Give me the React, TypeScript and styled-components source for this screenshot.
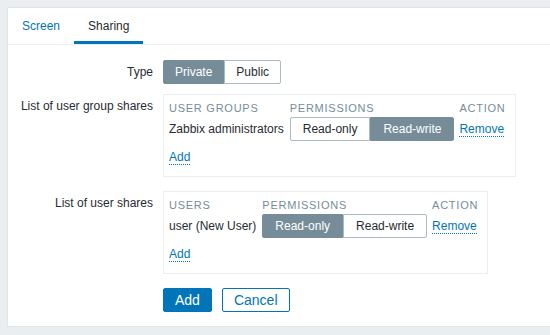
import React from 'react';
import styled, { createGlobalStyle } from 'styled-components';

const GlobalStyle = createGlobalStyle`
  html, body { margin: 0; padding: 0; }
  body {
    background: #ebeef0;
    font-family: "Liberation Sans", Arial, sans-serif;
    font-size: 12px;
    line-height: 14px;
    color: #1f2c33;
    overflow: hidden;
  }
`;

const Page = styled.div`
  padding: 7px 0 8px 7px;
`;

const Card = styled.div`
  background: #fff;
  border: 1px solid #dfe4e7;
  border-right: none;
  margin-right: -20px;
  padding-bottom: 14px;
`;

const TabBar = styled.div`
  display: flex;
  border-bottom: 1px solid #ebeef0;
`;

const Tab = styled.a<{ $active?: boolean }>`
  display: flex;
  align-items: center;
  height: 36px;
  padding: 0 14px;
  text-decoration: none;
  cursor: pointer;
  color: ${(p) => (p.$active ? '#1f2c33' : '#0275b8')};
  box-shadow: ${(p) => (p.$active ? 'inset 0 -3px 0 #0275b8' : 'none')};
`;

const Form = styled.div`
  display: grid;
  grid-template-columns: 145px 1fr;
  column-gap: 10px;
  row-gap: 10px;
  padding-top: 15px;
  align-items: start;
`;

const Label = styled.div`
  text-align: right;
  padding-top: 5px;
  white-space: nowrap;
`;

const Field = styled.div`
  display: flex;
  align-items: flex-start;
`;

const Segmented = styled.div<{ $tight?: boolean }>`
  display: inline-flex;
  --seg-pad: ${(p) => (p.$tight ? '11px' : '12px')};
`;

const Segment = styled.span<{ $on?: boolean }>`
  box-sizing: border-box;
  height: 24px;
  line-height: 22px;
  padding: 0 var(--seg-pad);
  white-space: nowrap;
  cursor: pointer;
  border: 1px solid ${(p) => (p.$on ? '#768d99' : '#acbbc2')};
  background: ${(p) => (p.$on ? '#768d99' : '#fff')};
  color: ${(p) => (p.$on ? '#fff' : '#1f2c33')};
  &:first-child { border-radius: 2px 0 0 2px; }
  &:last-child { border-radius: 0 2px 2px 0; }
`;

const ShareBox = styled.div`
  display: grid;
  grid-template-columns: repeat(3, auto);
  column-gap: 5px;
  justify-content: start;
  align-items: center;
  border: 1px solid #ebeef0;
  padding: 6px 9px 12px 5px;
  margin-bottom: 4px;
`;

const Th = styled.div`
  font-size: 11px;
  letter-spacing: 0.75px;
  text-transform: uppercase;
  color: #768d99;
  line-height: 14px;
  margin-bottom: 2px;
  white-space: nowrap;
`;

const Cell = styled.div<{ $first?: boolean }>`
  white-space: nowrap;
  margin-right: ${(p) => (p.$first ? '1px' : '0')};
`;

const AddCell = styled.div`
  grid-column: 1 / -1;
  margin-top: 9px;
`;

const Link = styled.a`
  color: #0275b8;
  text-decoration: none;
  border-bottom: 1px dotted #0275b8;
  cursor: pointer;
`;

const Buttons = styled.div`
  display: flex;
  gap: 10px;
`;

const Button = styled.button<{ $primary?: boolean }>`
  box-sizing: border-box;
  height: 24px;
  padding: 0 11px;
  font-family: inherit;
  font-size: 14px;
  line-height: 22px;
  border: 1px solid #0275b8;
  border-radius: 2px;
  cursor: pointer;
  background: ${(p) => (p.$primary ? '#0275b8' : '#fff')};
  color: ${(p) => (p.$primary ? '#fff' : '#0275b8')};
`;

type Share = { name: string; perm: 'ro' | 'rw' };

const ShareTable: React.FC<{ heading: string; item: Share }> = ({ heading, item }) => (
  <ShareBox>
    <Th>{heading}</Th>
    <Th>Permissions</Th>
    <Th>Action</Th>
    <Cell $first>{item.name}</Cell>
    <Segmented>
      <Segment $on={item.perm === 'ro'}>Read-only</Segment>
      <Segment $on={item.perm === 'rw'}>Read-write</Segment>
    </Segmented>
    <Cell>
      <Link>Remove</Link>
    </Cell>
    <AddCell>
      <Link>Add</Link>
    </AddCell>
  </ShareBox>
);

export default function App() {
  return (
    <>
      <GlobalStyle />
      <Page>
        <Card>
          <TabBar>
            <Tab>Screen</Tab>
            <Tab $active>Sharing</Tab>
          </TabBar>
          <Form>
            <Label>Type</Label>
            <Field>
              <Segmented $tight>
                <Segment $on>Private</Segment>
                <Segment>Public</Segment>
              </Segmented>
            </Field>

            <Label>List of user group shares</Label>
            <Field>
              <ShareTable heading="User groups" item={{ name: 'Zabbix administrators', perm: 'rw' }} />
            </Field>

            <Label>List of user shares</Label>
            <Field>
              <ShareTable heading="Users" item={{ name: 'user (New User)', perm: 'ro' }} />
            </Field>

            <div />
            <Field>
              <Buttons>
                <Button $primary>Add</Button>
                <Button>Cancel</Button>
              </Buttons>
            </Field>
          </Form>
        </Card>
      </Page>
    </>
  );
}
